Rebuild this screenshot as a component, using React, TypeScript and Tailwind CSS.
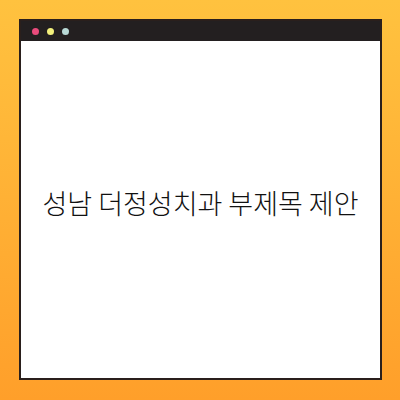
export default function App() {
  return (
    <div className="w-[400px] h-[400px] bg-gradient-to-b from-[#ffc23f] to-[#ff9f2a] pt-[19px] pl-[19px] pr-[18px] pb-[20px] flex">
      <div className="flex-1 flex flex-col border-2 border-[#2a1f1c] bg-white">
        <div className="h-[20px] bg-[#231f20] flex items-center gap-[8px] pl-[11px] shrink-0">
          <span className="w-[7px] h-[7px] rounded-full bg-[#ea4b7c]" />
          <span className="w-[7px] h-[7px] rounded-full bg-[#f3f07c]" />
          <span className="w-[7px] h-[7px] rounded-full bg-[#b9d9d6]" />
        </div>
        <div className="flex-1 flex items-center justify-center pb-[12px]">
          <p
            className="text-[27px] font-light text-[#111111]"
            style={{ fontFamily: '"Noto Sans CJK KR", "Noto Sans", sans-serif' }}
          >
            성남 더정성치과 부제목 제안
          </p>
        </div>
      </div>
    </div>
  );
}
